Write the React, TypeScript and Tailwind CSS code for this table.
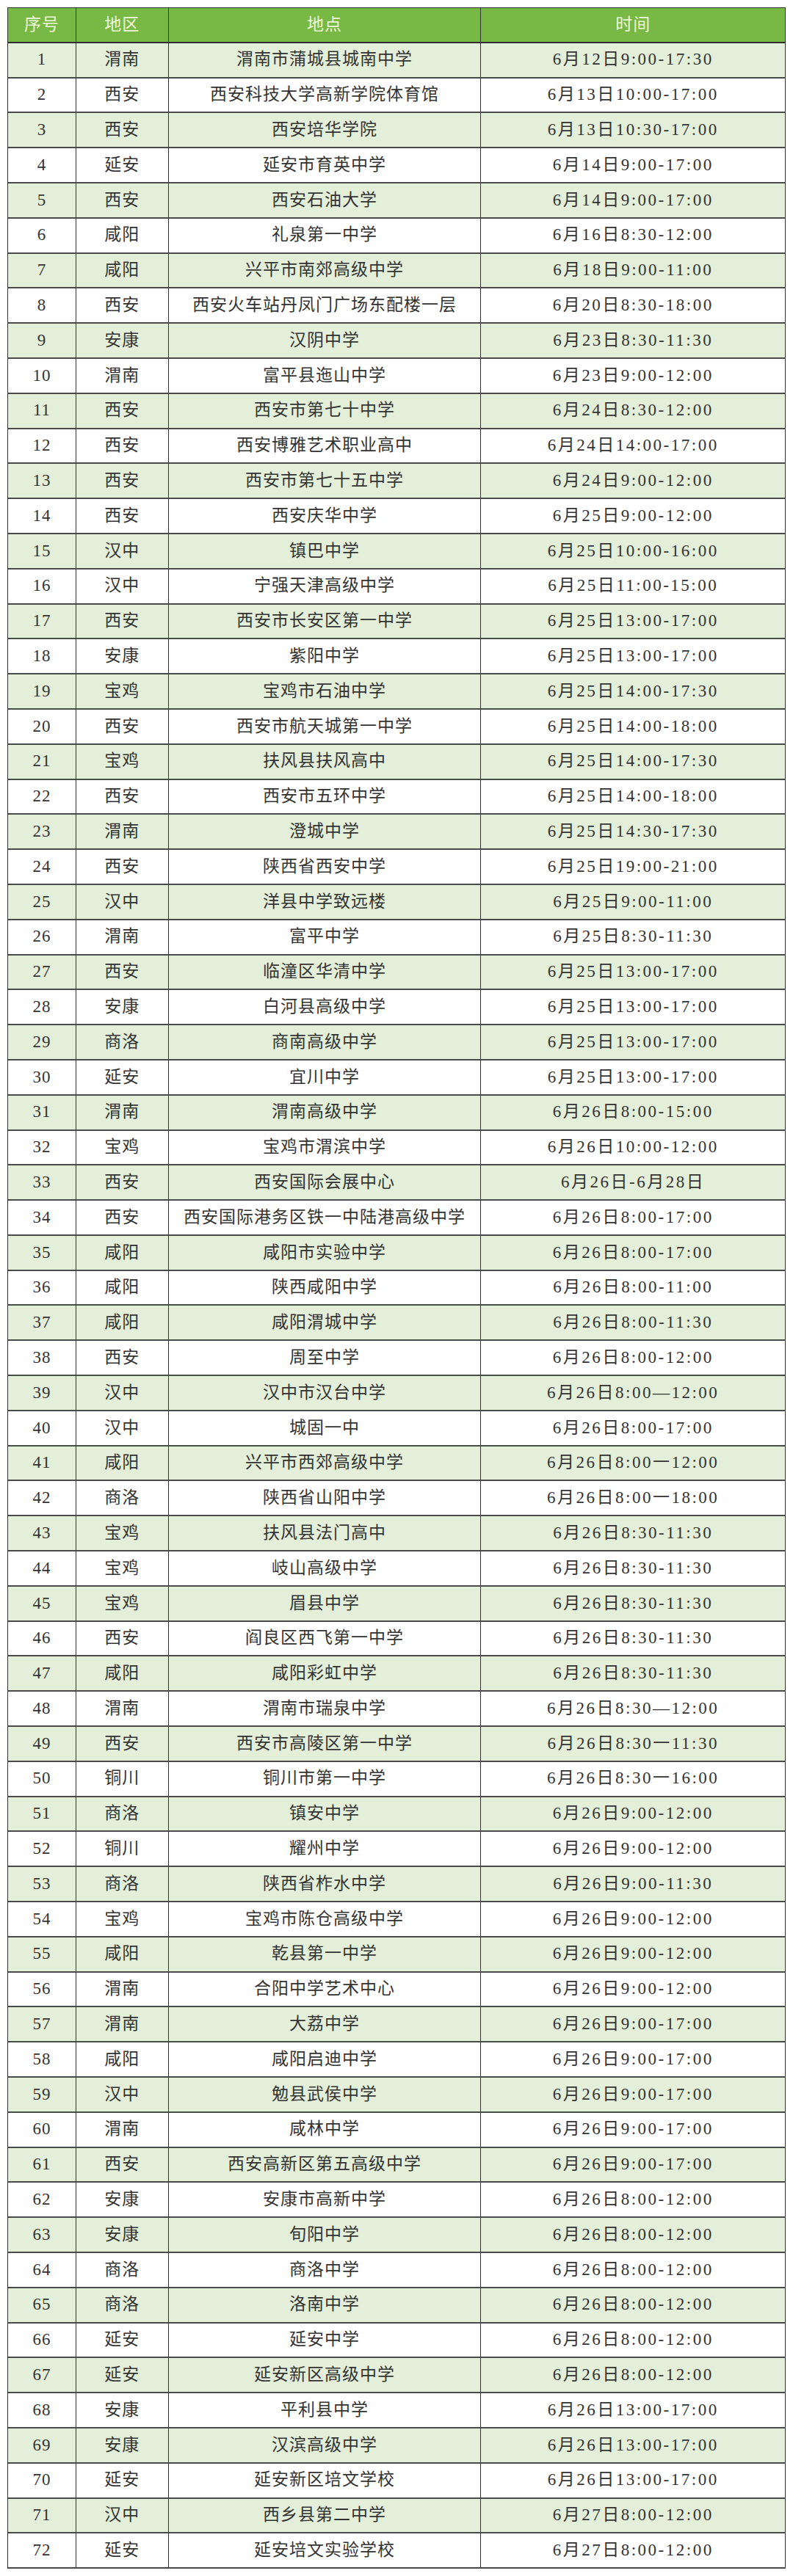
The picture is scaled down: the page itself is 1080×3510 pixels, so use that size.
const raw = `渭南|渭南市蒲城县城南中学|6月12日9:00-17:30
西安|西安科技大学高新学院体育馆|6月13日10:00-17:00
西安|西安培华学院|6月13日10:30-17:00
延安|延安市育英中学|6月14日9:00-17:00
西安|西安石油大学|6月14日9:00-17:00
咸阳|礼泉第一中学|6月16日8:30-12:00
咸阳|兴平市南郊高级中学|6月18日9:00-11:00
西安|西安火车站丹凤门广场东配楼一层|6月20日8:30-18:00
安康|汉阴中学|6月23日8:30-11:30
渭南|富平县迤山中学|6月23日9:00-12:00
西安|西安市第七十中学|6月24日8:30-12:00
西安|西安博雅艺术职业高中|6月24日14:00-17:00
西安|西安市第七十五中学|6月24日9:00-12:00
西安|西安庆华中学|6月25日9:00-12:00
汉中|镇巴中学|6月25日10:00-16:00
汉中|宁强天津高级中学|6月25日11:00-15:00
西安|西安市长安区第一中学|6月25日13:00-17:00
安康|紫阳中学|6月25日13:00-17:00
宝鸡|宝鸡市石油中学|6月25日14:00-17:30
西安|西安市航天城第一中学|6月25日14:00-18:00
宝鸡|扶风县扶风高中|6月25日14:00-17:30
西安|西安市五环中学|6月25日14:00-18:00
渭南|澄城中学|6月25日14:30-17:30
西安|陕西省西安中学|6月25日19:00-21:00
汉中|洋县中学致远楼|6月25日9:00-11:00
渭南|富平中学|6月25日8:30-11:30
西安|临潼区华清中学|6月25日13:00-17:00
安康|白河县高级中学|6月25日13:00-17:00
商洛|商南高级中学|6月25日13:00-17:00
延安|宜川中学|6月25日13:00-17:00
渭南|渭南高级中学|6月26日8:00-15:00
宝鸡|宝鸡市渭滨中学|6月26日10:00-12:00
西安|西安国际会展中心|6月26日-6月28日
西安|西安国际港务区铁一中陆港高级中学|6月26日8:00-17:00
咸阳|咸阳市实验中学|6月26日8:00-17:00
咸阳|陕西咸阳中学|6月26日8:00-11:00
咸阳|咸阳渭城中学|6月26日8:00-11:30
西安|周至中学|6月26日8:00-12:00
汉中|汉中市汉台中学|6月26日8:00—12:00
汉中|城固一中|6月26日8:00-17:00
咸阳|兴平市西郊高级中学|6月26日8:00一12:00
商洛|陕西省山阳中学|6月26日8:00一18:00
宝鸡|扶风县法门高中|6月26日8:30-11:30
宝鸡|岐山高级中学|6月26日8:30-11:30
宝鸡|眉县中学|6月26日8:30-11:30
西安|阎良区西飞第一中学|6月26日8:30-11:30
咸阳|咸阳彩虹中学|6月26日8:30-11:30
渭南|渭南市瑞泉中学|6月26日8:30—12:00
西安|西安市高陵区第一中学|6月26日8:30一11:30
铜川|铜川市第一中学|6月26日8:30一16:00
商洛|镇安中学|6月26日9:00-12:00
铜川|耀州中学|6月26日9:00-12:00
商洛|陕西省柞水中学|6月26日9:00-11:30
宝鸡|宝鸡市陈仓高级中学|6月26日9:00-12:00
咸阳|乾县第一中学|6月26日9:00-12:00
渭南|合阳中学艺术中心|6月26日9:00-12:00
渭南|大荔中学|6月26日9:00-17:00
咸阳|咸阳启迪中学|6月26日9:00-17:00
汉中|勉县武侯中学|6月26日9:00-17:00
渭南|咸林中学|6月26日9:00-17:00
西安|西安高新区第五高级中学|6月26日9:00-17:00
安康|安康市高新中学|6月26日8:00-12:00
安康|旬阳中学|6月26日8:00-12:00
商洛|商洛中学|6月26日8:00-12:00
商洛|洛南中学|6月26日8:00-12:00
延安|延安中学|6月26日8:00-12:00
延安|延安新区高级中学|6月26日8:00-12:00
安康|平利县中学|6月26日13:00-17:00
安康|汉滨高级中学|6月26日13:00-17:00
延安|延安新区培文学校|6月26日13:00-17:00
汉中|西乡县第二中学|6月27日8:00-12:00
延安|延安培文实验学校|6月27日8:00-12:00`;

const rows = raw.split("\n").map((line, i) => {
  const [area, place, time] = line.split("|");
  return { no: i + 1, area, place, time };
});

export default function App() {
  return (
    <main className="min-h-screen w-[1080px] bg-white p-[10px] font-['Liberation_Serif','Noto_Sans_CJK_SC',serif] text-[23px] text-[#333]">
      <div className="w-[1060px] border-l border-t border-[#333]">
        {/* Header */}
        <div className="flex h-[47.8px] border-b-2 border-[#2f2f2f] bg-[#78b844] text-[#eef7d8] tracking-[1px]">
          <div className="flex w-[93px] items-center justify-center border-r border-[#333]">序号</div>
          <div className="flex w-[126px] items-center justify-center border-r border-[#333]">地区</div>
          <div className="flex w-[426px] items-center justify-center border-r border-[#333]">地点</div>
          <div className="flex w-[415px] items-center justify-center border-r border-[#333]">时间</div>
        </div>

        {/* Rows */}
        {rows.map((r) => (
          <div
            key={r.no}
            className={`flex h-[47.8px] border-b-2 border-[#4a4a4a] ${
              r.no % 2 === 1 ? "bg-[#e3efd9]" : "bg-white"
            }`}
          >
            <div className="flex w-[93px] items-center justify-center border-r border-[#333] tracking-[1px]">
              {r.no}
            </div>
            <div className="flex w-[126px] items-center justify-center border-r border-[#333] tracking-[1px]">
              {r.area}
            </div>
            <div className="flex w-[426px] items-center justify-center border-r border-[#333] tracking-[1px]">
              {r.place}
            </div>
            <div className="flex w-[415px] items-center justify-center border-r border-[#333] tracking-[2.5px]">
              {r.time}
            </div>
          </div>
        ))}
      </div>
    </main>
  );
}
